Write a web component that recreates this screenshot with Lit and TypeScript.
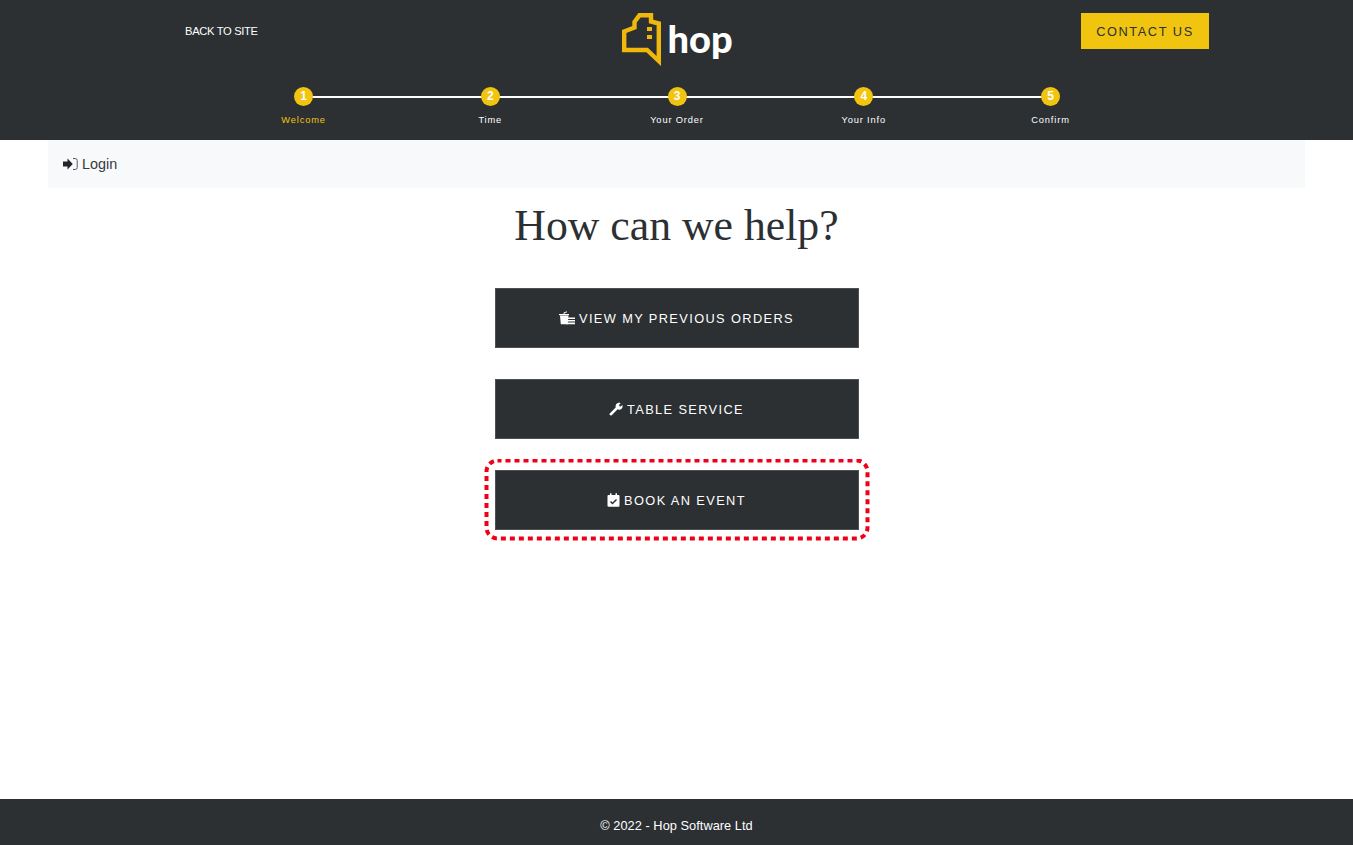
import { LitElement, html, css } from "lit";
import { customElement } from "lit/decorators.js";

const steps = ["Welcome", "Time", "Your Order", "Your Info", "Confirm"];

@customElement("app-root")
export class AppRoot extends LitElement {
  static styles = css`
    :host { display: flex; flex-direction: column; min-height: 845px; font-family: "Liberation Sans", Arial, sans-serif; color: #212529; background: #fff; }
    header { background: #2c3033; height: 140px; flex: none; display: flex; flex-direction: column; box-sizing: border-box; }
    .top { display: grid; grid-template-columns: 1fr auto 1fr; padding: 13px 144px 0; height: 87px; box-sizing: border-box; flex: none; }
    .back { color: #fff; font-size: 11.2px; letter-spacing: -0.33px; margin: 11px 0 0 41px; text-decoration: none; line-height: 14px; }
    .logo { display: flex; align-items: flex-start; }
    .logo svg { display: block; flex: none; overflow: visible; }
    .logo span { color: #fff; font-family: Lato, sans-serif; font-weight: 900; font-size: 38px; line-height: 50px; margin: 0 0 0 7px; }
    .contact { justify-self: end; background: #f1c40f; color: #2c3033; font-size: 12.8px; letter-spacing: 1.55px; width: 128px; height: 36px; display: flex; align-items: center; justify-content: center; box-sizing: border-box; }
    .steps { display: grid; grid-template-columns: repeat(5, 186.75px); justify-content: center; padding-left: 1px; }
    .step { position: relative; display: flex; flex-direction: column; align-items: center; }
    .dot { position: relative; z-index: 1; width: 19px; height: 19px; border-radius: 50%; background: #f1c40f; color: #fff; font-size: 12px; font-weight: 700; line-height: 19px; text-align: center; }
    .step:not(:last-child)::after { content: ""; position: absolute; left: 50%; width: 100%; top: 9px; height: 2px; background: #fff; }
    .label { color: #fff; font-size: 9.3px; letter-spacing: 0.85px; line-height: 12px; margin-top: 8px; }
    .step.active .label { color: #f1c40f; }
    nav { margin: 0 48px; height: 48px; background: #f8f9fa; display: flex; align-items: center; padding: 0 0 0 15px; box-sizing: border-box; font-size: 14.4px; gap: 4px; flex: none; color: #343a40; }
    nav svg { display: block; }
    main { flex: 1; display: flex; flex-direction: column; align-items: center; }
    h1 { font-family: "Liberation Serif", serif; font-weight: 400; font-size: 43.75px; line-height: 53px; margin: 11px 0 0; color: #2c3033; }
    .btns { display: flex; flex-direction: column; gap: 31px; margin-top: 36px; }
    .btn { position: relative; width: 364px; height: 60px; background: #2c3033; color: #fff; font-size: 12.8px; letter-spacing: 1.38px; display: flex; align-items: center; justify-content: center; gap: 4px; box-sizing: border-box; border: 1px solid #4d5054; }
    .btn > svg { display: block; flex: none; }
    .btn > svg.ring { position: absolute; left: -12px; top: -12px; pointer-events: none; }
    footer { background: #2c3033; color: #fff; height: 46px; display: flex; align-items: center; justify-content: center; font-size: 12.8px; letter-spacing: 0.03px; padding-top: 6px; box-sizing: border-box; flex: none; }
  `;

  render() {
    return html`
      <header>
        <div class="top">
          <a class="back">BACK TO SITE</a>
          <div class="logo">
            <svg width="40" height="54" viewBox="0 0 40 54" fill="none">
              <path d="M4.200 37V18.500L14.500 14.500V9L19.500 2.200H31V8.500L38.800 10.500V48L27 37Z" stroke="#f1b80c" stroke-width="4.400" stroke-linejoin="miter"/>
              <rect x="27" y="14" width="5" height="4" fill="#f1b80c"/>
              <rect x="27" y="22" width="5" height="4" fill="#f1b80c"/>
            </svg>
            <span>hop</span>
          </div>
          <a class="contact">CONTACT US</a>
        </div>
        <div class="steps">
          ${steps.map((s, i) => html`
            <div class="step ${i === 0 ? "active" : ""}">
              <div class="dot">${i + 1}</div>
              <div class="label">${s}</div>
            </div>`)}
        </div>
      </header>
      <nav>
        <svg width="15" height="14" viewBox="0 0 15 14"><path fill="#212529" d="M0 4.500H4.500V1.500L9.800 7 4.500 12.500V9.500H0Z"/><path fill="none" stroke="#555b61" stroke-width="1" d="M10 1.500H12.200Q14.200 1.500 14.200 3.500V10.500Q14.200 12.500 12.200 12.500H10"/></svg>
        Login
      </nav>
      <main>
        <h1>How can we help?</h1>
        <div class="btns">
          <div class="btn">
            <svg width="16" height="14" viewBox="0 0 16 14" fill="#fff"><path d="M1 4.500H9.500L8.700 13.200H1.800Z"/><path d="M5 4V1.800L8 .8" stroke="#fff" fill="none"/><path d="M0 3H10V4.200H0Z"/><path d="M7 6.500H16V8H7ZM7 9H16V10.500H7ZM7 11.500H16V13.200H7Z"/></svg>
            VIEW MY PREVIOUS ORDERS
          </div>
          <div class="btn">
            <svg width="14" height="14" viewBox="0 0 14 14" fill="#fff"><path d="M.7 11.400 6.700 5.400C6.200 3.600 7.100 1.700 8.900 1 9.900.7 10.900.8 11.700 1.200L10 3 10.400 4.200 11.600 4.600 13.400 2.900C14 4.800 13.200 6.800 11.400 7.500 10.400 7.800 9.500 7.700 8.700 7.300L2.700 13.300C1.500 14.300-.1 12.600.7 11.400Z"/></svg>
            TABLE SERVICE
          </div>
          <div class="btn">
            <svg width="13" height="14" viewBox="0 0 13 14"><path fill="#fff" d="M1.500 2H3V.3H4.500V2H8.500V.3H10V2H11.500Q12.500 2 12.500 3V12.700Q12.500 13.700 11.500 13.700H1.500Q.5 13.700 .5 12.700V3Q.5 2 1.500 2Z"/><path fill="none" stroke="#2c3033" stroke-width="1.500" d="M3.500 8.500 5.500 10.500 9.500 6.500"/></svg>
            BOOK AN EVENT
            <svg class="ring" width="386" height="82" viewBox="0 0 386 82" fill="none"><rect x="2.500" y="1.500" width="381" height="78" rx="11" stroke="#f00018" stroke-width="4" stroke-dasharray="5 4" stroke-dashoffset="1"/></svg>
          </div>
        </div>
      </main>
      <footer>© 2022 - Hop Software Ltd</footer>
    `;
  }
}
